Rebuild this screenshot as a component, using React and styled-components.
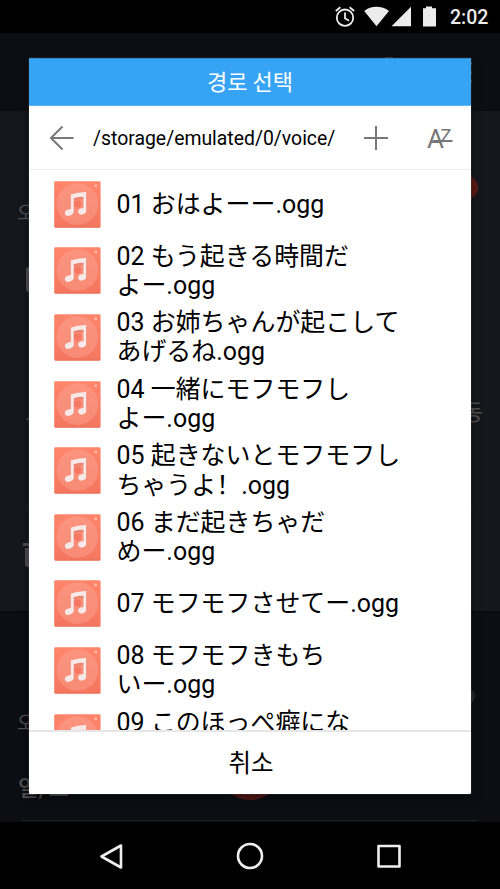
import styled, { createGlobalStyle, css } from 'styled-components'


const GlobalStyle = createGlobalStyle`
  * {
    box-sizing: border-box;
  }

  body {
    margin: 0;
    background: #000;
    font-family: Roboto, 'Noto Sans CJK JP', sans-serif;
  }
`

const Phone = styled.div`
  position: relative;
  width: 500px;
  height: 889px;
  display: flex;
  flex-direction: column;
  overflow: hidden;
  background: #000;
`

const StatusBar = styled.header`
  height: 33px;
  padding: 0 11px 0 0;
  display: flex;
  justify-content: flex-end;
  color: #ececec;
`

const StatusIcons = styled.svg`
  width: 120px;
  height: 33px;
  flex: none;
`

const Clock = styled.span`
  width: 39px;
  font-size: 19.5px;
  font-weight: 500;
  line-height: 35px;
  white-space: nowrap;
`

const Backdrop = styled.main`
  height: 789px;
  font-family: Roboto, 'Noto Sans CJK KR', sans-serif;
  color: #515154;
`

const AppHeader = styled.div`
  height: 78px;
  padding: 24px 28px 0 0;
  display: flex;
  justify-content: flex-end;
  gap: 76px;
  background: #0d0e13;
`

const HeaderTab = styled.i`
  width: 8px;
  height: 3px;
  background: #303235;
`

const MoreDots = styled.div`
  padding-top: 5px;
  display: flex;
  flex-direction: column;
  gap: 6px;
`

const AlarmCard = styled.section`
  height: ${props => props.height}px;
  background: ${props => props.$dark ? '#0d0e13' : '#15171c'};
  padding-top: ${props => props.$top || 0}px;
  ${props => props.$dark && css`
    border-top: 2px solid #090a0e;
  `}
`

const CardRow = styled.div`
  height: ${props => props.height}px;
  padding: 0 ${props => props.$right || 0}px 0 ${props => props.$left || 0}px;
  display: flex;
  align-items: ${props => props.$bottom ? 'flex-end' : 'center'};
  justify-content: ${props => props.$justify || 'flex-start'};
  font-size: ${props => props.size || 19}px;
  font-weight: ${props => props.$bold ? 500 : 400};
  line-height: 1;
`

const Dot = styled.i`
  width: ${props => props.size}px;
  height: ${props => props.size}px;
  border-radius: 50%;
  background: ${props => props.color};
`

const AddAlarm = styled(Dot)`
  position: absolute;
  left: 217px;
  top: 734px;
`

const CheckBox = styled.i`
  width: 25px;
  height: 25px;
  border-radius: 3px;
  background: #515154;
`

const CardIcon = styled.svg`
  width: ${props => props.width}px;
  height: ${props => props.height}px;
  fill: #515154;
`

const CardLine = styled.hr`
  height: 1px;
  margin: ${props => props.$top}px ${props => props.$inset}px 0;
  border: 0;
  background: #1e2025;
`

const Dialog = styled.section`
  position: absolute;
  left: 29px;
  top: 58px;
  width: 442px;
  height: 736px;
  display: flex;
  flex-direction: column;
  overflow: hidden;
  border-radius: 2px;
  background: #fff;
  color: #000;
  box-shadow: 0 0 1px #aaa, 0 4px 10px rgba(0, 0, 0, 0.5);
`

const DialogTitle = styled.h1`
  height: 48px;
  flex: none;
  margin: 0;
  border-top: 1px solid #2d8bd2;
  border-bottom: 1px solid #60b6f7;
  background: #36a3f5;
  color: #fff;
  font-family: 'Noto Sans CJK KR', sans-serif;
  font-size: 22px;
  font-weight: 400;
  line-height: 43px;
  text-align: center;
`

const PathBar = styled.div`
  height: 64px;
  flex: none;
  padding-left: 20px;
  display: flex;
  align-items: center;
  border-bottom: 1px solid #ededed;
`

const ToolIcon = styled.svg`
  width: 26px;
  height: 26px;
  flex: none;
  fill: none;
  stroke: #777;
  stroke-width: 2;
`

const SortIcon = styled(ToolIcon)`
  width: 34px;
  margin-left: 35px;
  overflow: visible;

  text {
    fill: #777;
    stroke: none;
    font-family: Roboto, sans-serif;
  }
`

const PathText = styled.span`
  width: 270px;
  flex: none;
  padding: 2px 0 0 18px;
  margin-right: 18px;
  font-size: 19.4px;
  line-height: 24px;
  white-space: nowrap;
`

const FileList = styled.ul`
  flex: 1;
  min-height: 0;
  margin: 0;
  padding: 1px 0 0;
  overflow: hidden;
  list-style: none;
`

const FileRow = styled.li`
  height: 66.6px;
  padding-left: 25px;
  display: flex;
  align-items: center;
  gap: 15.5px;
`

const MusicIcon = styled.svg`
  width: 47px;
  height: 47px;
  flex: none;
`

const FileName = styled.span`
  display: flex;
  flex-direction: column;
  font-size: 24.95px;
  line-height: 29.3px;
  white-space: nowrap;
`

const Mark = styled.span`
  font-family: 'Noto Sans CJK SC', sans-serif;
  line-height: 0;
`

const CancelButton = styled.button`
  height: 64px;
  flex: none;
  padding: 0 0 3px 2px;
  border: 0;
  border-top: 2px solid #e6e6e6;
  background: #fff;
  color: #000;
  font-family: 'Noto Sans CJK KR', sans-serif;
  font-size: 24.5px;
`

const NavBar = styled.nav`
  height: 67px;
  padding: 0 97px;
  display: flex;
  align-items: center;
  justify-content: space-between;
`

const NavIcon = styled.svg`
  width: 28px;
  height: 28px;
  fill: none;
  stroke: #eee;
  stroke-width: 2.6;
  stroke-linejoin: round;
`

const files = [
  ['01 おはよーー.ogg'],
  ['02 もう起きる時間だ', 'よー.ogg'],
  ['03 お姉ちゃんが起こして', 'あげるね.ogg'],
  ['04 一緒にモフモフし', 'よー.ogg'],
  ['05 起きないとモフモフし', <>ちゃうよ<Mark lang="zh-CN">！</Mark>.ogg</>],
  ['06 まだ起きちゃだ', 'めー.ogg'],
  ['07 モフモフさせてー.ogg'],
  ['08 モフモフきもち', 'いー.ogg'],
  ['09 このほっぺ癖にな', 'る.ogg'],
]


const Music = () => {
  return (
    <MusicIcon viewBox="0 0 47 47">
      <defs>
        <linearGradient id="cover" x1="0" y1="0" x2="0" y2="1">
          <stop offset="0" stopColor="#ff856b" />
          <stop offset="1" stopColor="#f4765e" />
        </linearGradient>
        <linearGradient id="disc" x1="0" y1="0" x2="0" y2="1">
          <stop offset="0" stopColor="#fb9480" />
          <stop offset="1" stopColor="#f88b75" />
        </linearGradient>
      </defs>
      <rect x="0.2" y="0.2" width="46.4" height="46.4" rx="1.4" fill="url(#cover)" />
      <path d="M1 46.2h45" stroke="#e66b55" strokeWidth="0.8" />
      <circle cx="23.4" cy="23" r="20.8" fill="url(#disc)" />
      <circle cx="23.6" cy="23" r="3.7" fill="#f57863" />
      <circle cx="41.7" cy="4.8" r="1.5" fill="#ffb5a6" />
      <g fill="#d96f5d" opacity="0.4" transform="translate(0.6 1)">
        <path d="M17 14.5L32.3 11v19.5h-2.6V16.7l-10 1.2v14H17z" />
      </g>
      <g fill="#f8e9e9">
        <path d="M16.9 13.5Q24 10.9 32.2 11v19.2h-2.7V15.8q-5-.1-9.8 1.4V31h-2.8z" />
        <ellipse cx="15.3" cy="31.5" rx="4.5" ry="3.1" transform="rotate(-18 15.3 31.5)" />
        <ellipse cx="28.2" cy="30.3" rx="4.1" ry="3.1" transform="rotate(-18 28.2 30.3)" />
      </g>
    </MusicIcon>
  )
}

const FileItem = ({ lines }) => {
  return (
    <FileRow>
      <Music />
      <FileName>
        {lines.map((line, i) => <span key={i}>{line}</span>)}
      </FileName>
    </FileRow>
  )
}

const Status = () => {
  return (
    <StatusBar>
      <StatusIcons viewBox="330 0 120 33" fill="#ececec">
        <g fill="none" stroke="#ececec" strokeWidth="1.8">
          <circle cx="345" cy="17.7" r="8.2" />
          <path d="M345 12.5v5.8l4 2.5M335.8 11l4.6-3.7M349.6 7.3l4.6 3.7" />
        </g>
        <path d="M376.5 26.2L364.2 11q5.4-4.2 12.3-4.2T389 11z" />
        <path d="M391.5 26.2L411 6.8v19.4z" />
        <path d="M423 8.2h3V6.6h6v1.6h4v18.4h-13z" />
      </StatusIcons>
      <Clock>2:02</Clock>
    </StatusBar>
  )
}

const AlarmList = () => {
  return (
    <Backdrop>
      <AppHeader>
        <HeaderTab />
        <MoreDots>
          <Dot size={3} color="#4a4b4e" />
          <Dot size={3} color="#4a4b4e" />
          <Dot size={3} color="#4a4b4e" />
        </MoreDots>
      </AppHeader>
      <AlarmCard height={500} $top={63}>
        <CardRow height={26} $justify="flex-end" $right={22}>
          <Dot size={25} color="#591a16" />
        </CardRow>
        <CardRow height={26} $left={17}>오</CardRow>
        <CardRow height={106} $left={26}>
          <CheckBox />
        </CardRow>
        <CardRow height={162} size={22} $justify="space-between" $left={26} $right={17}>
          <CardIcon width={6} height={18} viewBox="0 0 6 18"><path d="M0 16L5 11v5z" /></CardIcon>
          <span>동</span>
        </CardRow>
        <CardLine $top={16} $inset={25} />
        <CardRow height={88} $left={23}>
          <CardIcon width={20} height={24} viewBox="0 0 20 24">
            <path d="M0 0h20v3H0zM2 5h16v16q0 3-3 3H5q-3 0-3-3z" />
          </CardIcon>
        </CardRow>
      </AlarmCard>
      <AlarmCard height={211} $dark>
        <CardRow height={92} $bottom $justify="flex-end" $right={25}>
          <Dot size={17} color="#29292d" />
        </CardRow>
        <CardRow height={36} $left={17}>오</CardRow>
        <CardRow height={59} size={22} $bottom $bold $left={18}>일, 브</CardRow>
        <CardLine $top={20} $inset={22} />
      </AlarmCard>
      <AddAlarm size={66} color="#591a16" />
    </Backdrop>
  )
}

export default function App() {
  return (
    <Phone>
      <GlobalStyle />
      <Status />
      <AlarmList />
      <NavBar>
        <NavIcon viewBox="0 0 28 28"><path d="M4.5 14.5L24 3.5v22z" /></NavIcon>
        <NavIcon viewBox="0 0 28 28"><circle cx="14" cy="14" r="12" /></NavIcon>
        <NavIcon viewBox="0 0 28 28"><path d="M3.5 4h21v20.5h-21z" /></NavIcon>
      </NavBar>
      <Dialog>
        <DialogTitle>경로 선택</DialogTitle>
        <PathBar>
          <ToolIcon viewBox="0 0 26 26"><path d="M13.5 1.5L2 13l11.5 11.5M2 13h22.5" /></ToolIcon>
          <PathText>/storage/emulated/0/voice/</PathText>
          <ToolIcon viewBox="0 0 26 26"><path d="M13 1v24M1 13h24" /></ToolIcon>
          <SortIcon viewBox="0 0 34 26">
            <text x="3" y="22.5" fontSize="26">A</text>
            <text x="16.5" y="17" fontSize="18.5">Z</text>
            <path d="M9 16h19.5" />
          </SortIcon>
        </PathBar>
        <FileList>
          {files.map((lines) => <FileItem key={lines[0]} lines={lines} />)}
        </FileList>
        <CancelButton>취소</CancelButton>
      </Dialog>
    </Phone>
  )
}
